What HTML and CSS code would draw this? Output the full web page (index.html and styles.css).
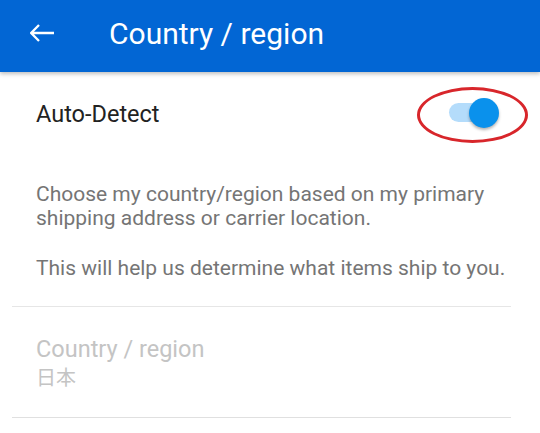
FILE: index.html
```html
<!DOCTYPE html>
<html lang="en-US">
<head>
    <meta charset="UTF-8">
    <meta name="viewport" content="width=device-width, initial-scale=1.0">
    <title>Country / region</title>
    <link rel="stylesheet" href="styles.css">
</head>
<body>
    <header class="app-bar">
        <button class="back" aria-label="Back">
            <svg width="24" height="18" viewBox="0 0 24 18">
                <path d="M24 9H1.5M9 1L1.2 9L9 17" fill="none" stroke="#fff" stroke-width="2.3"/>
            </svg>
        </button>
        <h1 class="title">Country / region</h1>
    </header>

    <main class="content">
        <div class="row auto-detect">
            <span class="label">Auto-Detect</span>
            <div class="switch-wrap">
                <div class="switch on">
                    <span class="track"></span>
                    <span class="knob"></span>
                </div>
                <span class="ring"></span>
            </div>
        </div>

        <div class="info">
            <p>Choose my country/region based on my primary shipping address or carrier location.</p>
            <p>This will help us determine what items ship to you.</p>
        </div>

        <div class="row picker disabled">
            <span class="picker-label">Country / region</span>
            <span class="picker-value">日本</span>
        </div>
    </main>
</body>
</html>
```

FILE: styles.css
```css
body {
    margin: 0;
    font-family: Roboto, "Noto Sans CJK JP", sans-serif;
    background: #fff;
}

.app-bar {
    display: flex;
    align-items: center;
    height: 66px;
    padding-bottom: 6px;
    background-color: #0266d4;
    box-shadow: 0 2px 4px rgba(0, 0, 0, 0.25);
    position: relative;
    z-index: 1;
}

.back {
    display: flex;
    align-items: center;
    justify-content: center;
    width: 24px;
    height: 24px;
    margin: 0 55px 0 30px;
    padding: 0;
    background: none;
    border: none;
}

.title {
    margin: 0;
    color: #fff;
    font-size: 30px;
    font-weight: 400;
}

.content {
    padding: 0 29px 0 12px;
}

.row {
    display: flex;
}

.auto-detect {
    align-items: center;
    justify-content: space-between;
    height: 84px;
    padding: 0 12px 0 24px;
}

.label {
    font-size: 23.5px;
    color: #222;
}

.switch-wrap {
    position: relative;
    margin-top: -2px;
}

.switch {
    position: relative;
    width: 50px;
    height: 30px;
}

.track {
    position: absolute;
    left: 0;
    top: 5px;
    width: 44px;
    height: 19px;
    border-radius: 10px;
    background: #b4dcfb;
}

.knob {
    position: absolute;
    right: 0;
    top: 0;
    width: 30px;
    height: 30px;
    border-radius: 50%;
    background: #0a91ec;
    box-shadow: 0 2px 3px rgba(0, 0, 0, 0.3);
}

.ring {
    position: absolute;
    left: -32px;
    top: -11px;
    width: 105px;
    height: 50px;
    border: 3px solid #d8262b;
    border-radius: 50%;
}

.info {
    padding: 26px 0 26px 24px;
    border-bottom: 1px solid #e6e6e6;
    color: #757575;
    font-size: 21px;
    line-height: 24px;
}

.info p {
    margin: 0 0 26px;
}

.info p:last-child {
    margin: 0;
}

.picker {
    flex-direction: column;
    justify-content: center;
    height: 110px;
    padding-left: 24px;
    border-bottom: 1px solid #e0e0e0;
}

.disabled {
    color: #c4c4c4;
}

.picker-label {
    font-size: 23.5px;
    line-height: 30px;
    margin-top: 2px;
}

.picker-value {
    font-size: 20px;
    line-height: 28px;
}
```
